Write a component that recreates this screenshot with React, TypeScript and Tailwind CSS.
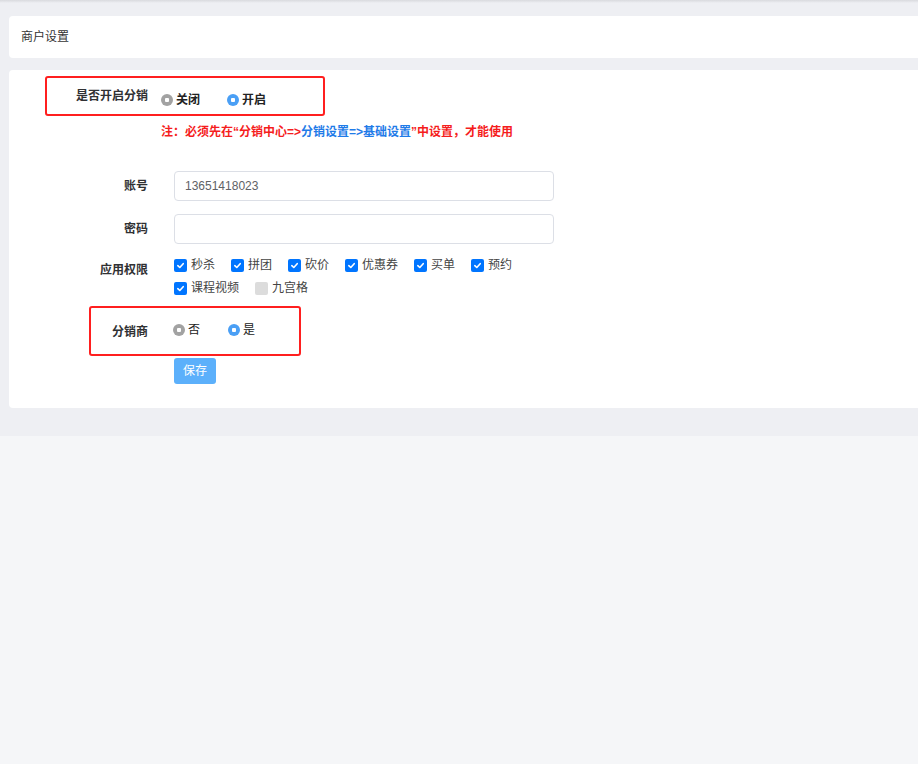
import type { ReactNode } from 'react';

const font = { fontFamily: '"Liberation Sans", "Noto Sans CJK SC", sans-serif' };

function Radio({ label, checked, bold }: { label: string; checked?: boolean; bold?: boolean }) {
  return (
    <span className="flex items-center">
      <span
        className={`flex h-[12px] w-[12px] items-center justify-center rounded-full ${
          checked ? 'bg-[#4a9ff5]' : 'bg-[#a2a2a2]'
        }`}
      >
        <span className="h-[4px] w-[4px] rounded-[1px] bg-white" />
      </span>
      <span className={`ml-[3px] text-[12px] leading-[16px] text-[#222] ${bold ? 'font-bold' : ''}`}>{label}</span>
    </span>
  );
}

function Check({ label, checked = true }: { label: string; checked?: boolean }) {
  return (
    <span className="mr-[16px] flex items-center">
      <span
        className={`flex h-[13px] w-[13px] items-center justify-center rounded-[2px] ${
          checked ? 'bg-[#0075ff]' : 'bg-[#dcdcdc]'
        }`}
      >
        {checked && (
          <svg width="9" height="9" viewBox="0 0 10 10">
            <path d="M2 5.2 L4.2 7.2 L8 3" fill="none" stroke="white" strokeWidth="1.8" strokeLinecap="round" strokeLinejoin="round" />
          </svg>
        )}
      </span>
      <span className="ml-[4px] text-[12px] leading-[18px] text-[#444]">{label}</span>
    </span>
  );
}

function Label({ children, className = '' }: { children: ReactNode; className?: string }) {
  return (
    <div className={`w-[139px] shrink-0 text-right text-[12px] font-bold leading-[16px] text-[#303133] ${className}`}>
      {children}
    </div>
  );
}

export default function App() {
  const perms = ['秒杀', '拼团', '砍价', '优惠券', '买单', '预约', '课程视频'];
  return (
    <div className="min-h-screen overflow-hidden bg-[#f5f6f8]" style={font}>
      <div className="bg-[#eeeff3] pb-[28px] pl-[9px]">
        <div className="h-[3px] bg-gradient-to-b from-[#d9dade] to-[#eeeff3] -ml-[9px]" />
        <div className="mt-[13px] flex h-[42px] w-[calc(100%+10px)] items-center rounded-[4px] bg-white pl-[12px] text-[12px] text-[#333]">
          商户设置
        </div>
        <div className="relative mt-[12px] w-[calc(100%+10px)] rounded-[4px] bg-white pb-[24px] pt-[16px]">
          <div className="pointer-events-none absolute left-[36px] top-[6px] h-[40px] w-[280px] rounded-[3px] border-[2.5px] border-[#ff1f1f]" />
          <div className="pointer-events-none absolute left-[80px] top-[236px] h-[50px] w-[212px] rounded-[3px] border-[2.5px] border-[#ff1f1f]" />

          <div className="flex h-[20px] items-center">
            <Label>是否开启分销</Label>
            <div className="ml-[13px] flex items-center gap-[27px] pt-[7px]">
              <Radio label="关闭" bold />
              <Radio label="开启" checked bold />
            </div>
          </div>

          <div className="ml-[152px] mt-[18px] text-[12px] font-bold leading-[16px] text-[#f51d1d]">
            注：必须先在“分销中心=&gt;<span className="text-[#1f7be8]">分销设置=&gt;基础设置</span>”中设置，才能使用
          </div>

          <div className="mt-[31px] flex h-[30px] items-center">
            <Label>账号</Label>
            <input
              className="ml-[26px] h-[30px] w-[380px] rounded-[4px] border border-[#dcdfe6] px-[10px] text-[12px] text-[#606266] outline-none"
              defaultValue="13651418023"
              style={font}
            />
          </div>

          <div className="mt-[13px] flex h-[30px] items-center">
            <Label>密码</Label>
            <input
              type="password"
              className="ml-[26px] h-[30px] w-[380px] rounded-[4px] border border-[#dcdfe6] px-[10px] text-[12px] outline-none"
            />
          </div>

          <div className="mt-[12px] flex items-start">
            <Label className="pt-[6px]">应用权限</Label>
            <div className="ml-[26px] flex w-[380px] flex-wrap gap-y-[5px]">
              {perms.map((p) => (
                <Check key={p} label={p} />
              ))}
              <Check label="九宫格" checked={false} />
            </div>
          </div>

          <div className="mt-[23px] flex h-[20px] items-center">
            <Label className="pt-[4px]">分销商</Label>
            <div className="ml-[25px] flex items-center gap-[28px]">
              <Radio label="否" />
              <Radio label="是" checked />
            </div>
          </div>

          <div className="ml-[165px] mt-[18px]">
            <button className="h-[26px] w-[42px] rounded-[3px] bg-[#5cb0fb] text-[12px] text-white" style={font}>
              保存
            </button>
          </div>
        </div>
      </div>
    </div>
  );
}
